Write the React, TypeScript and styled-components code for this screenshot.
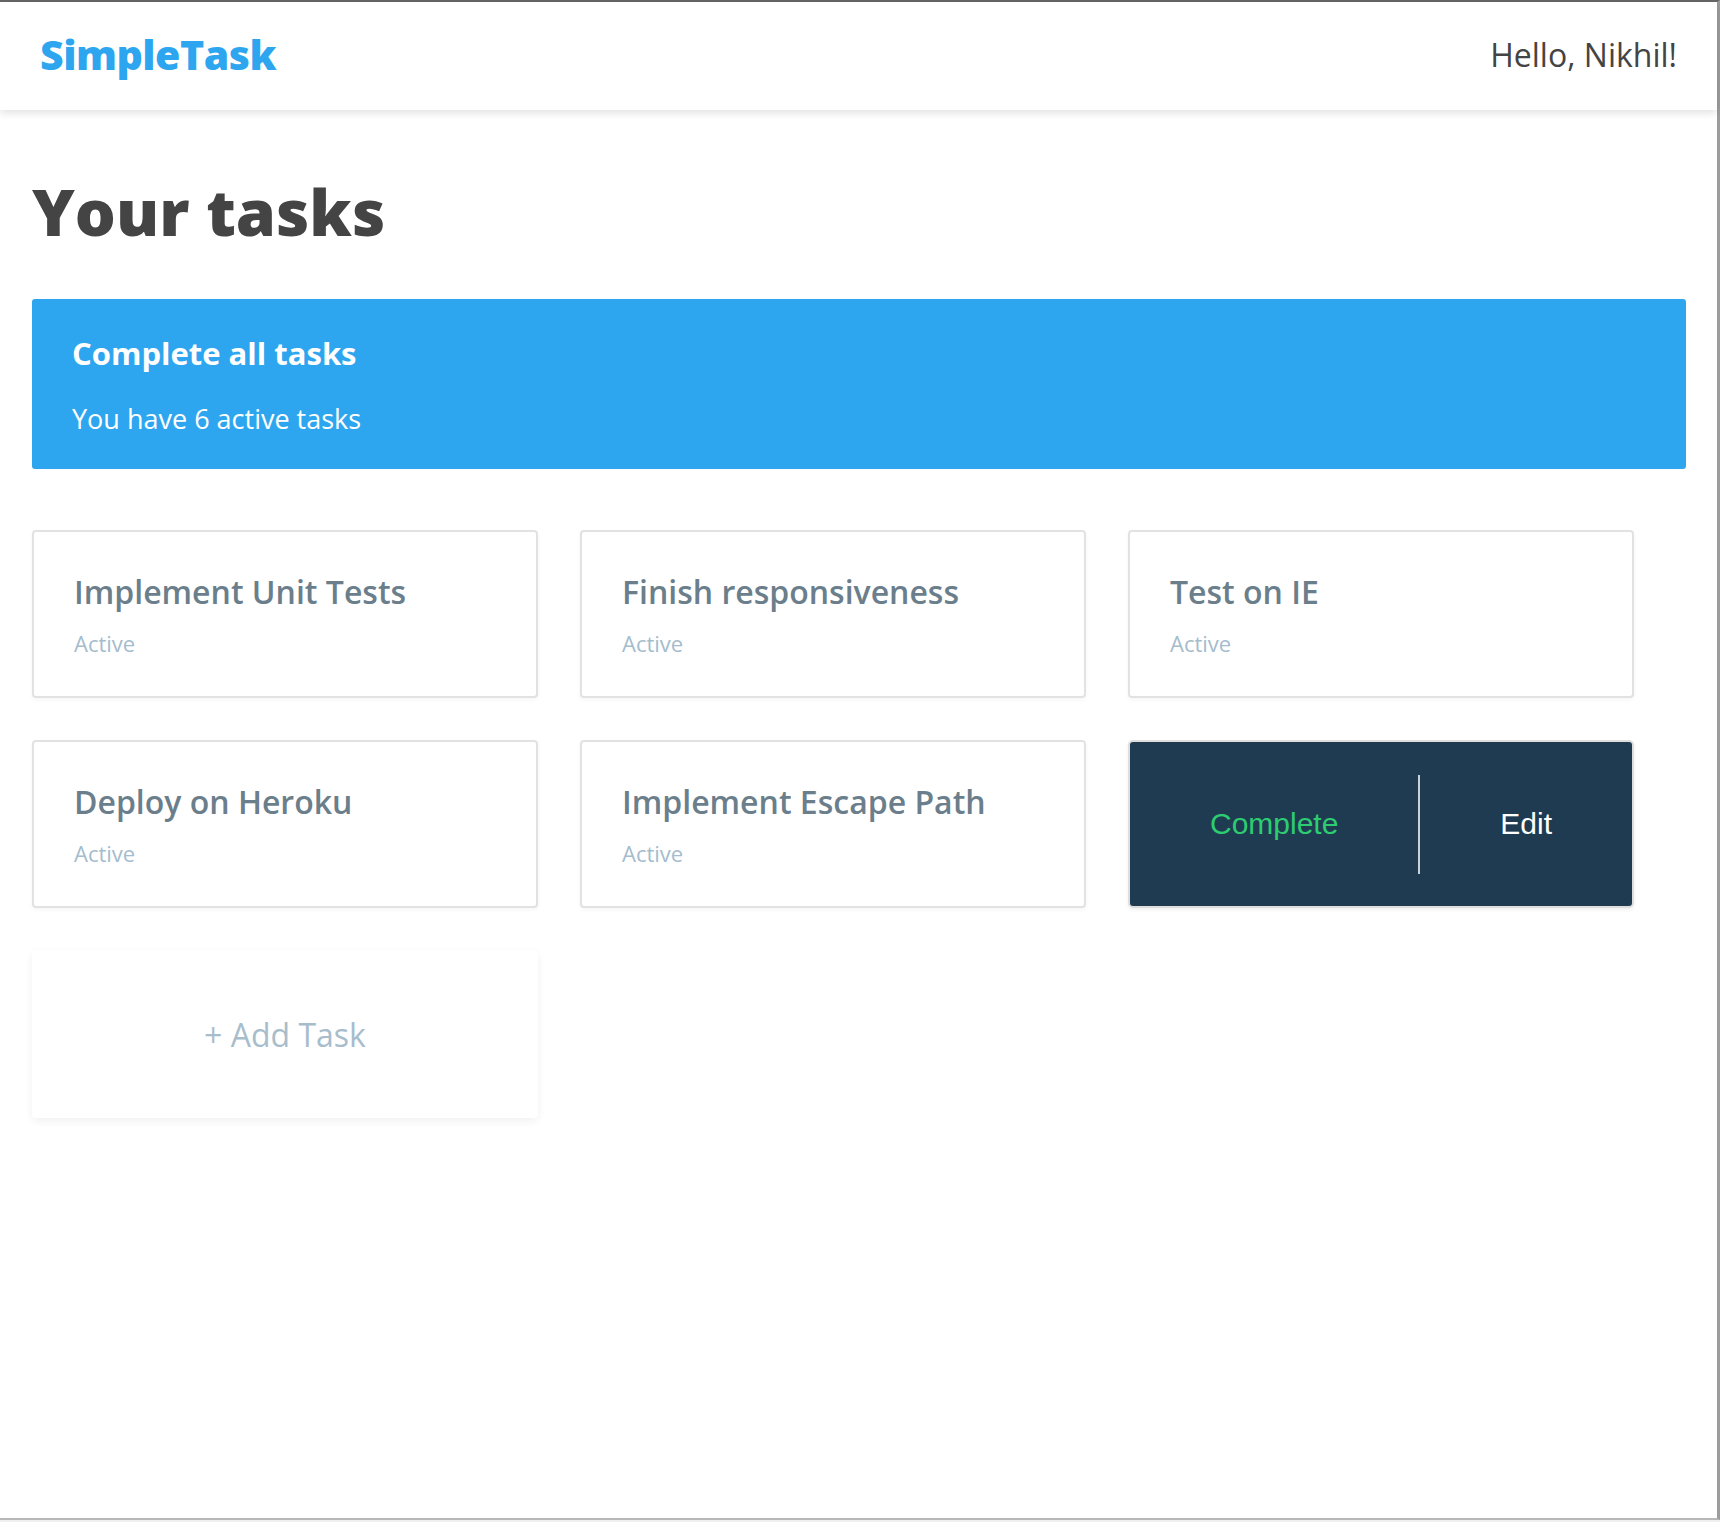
import React from "react"
import styled, { createGlobalStyle } from "styled-components"

const GlobalStyle = createGlobalStyle`
  html, body {
    margin: 0;
    padding: 0;
    background: #efefef;
  }
  * {
    box-sizing: border-box;
  }
`

const tasks = [
  { id: 1, title: "Implement Unit Tests", status: "Active" },
  { id: 2, title: "Finish responsiveness", status: "Active" },
  { id: 3, title: "Test on IE", status: "Active" },
  { id: 4, title: "Deploy on Heroku", status: "Active" },
  { id: 5, title: "Implement Escape Path", status: "Active" },
]

const App = () => {
  return (
    <>
      <GlobalStyle />
      <Window>
        <Header>
          <Logo>SimpleTask</Logo>
          <Greeting>Hello, Nikhil!</Greeting>
        </Header>
        <Main>
          <PageTitle>Your tasks</PageTitle>
          <Banner>
            <BannerTitle>Complete all tasks</BannerTitle>
            <BannerText>You have 6 active tasks</BannerText>
          </Banner>
          <TaskGrid>
            {tasks.map((t) => (
              <TaskCard key={t.id}>
                <TaskTitle>{t.title}</TaskTitle>
                <TaskStatus>{t.status}</TaskStatus>
              </TaskCard>
            ))}
            <ActionCard>
              <ActionButton $color="#2ecc71">Complete</ActionButton>
              <Divider />
              <ActionButton $color="#ffffff">Edit</ActionButton>
            </ActionCard>
            <AddCard>+ Add Task</AddCard>
          </TaskGrid>
        </Main>
      </Window>
    </>
  )
}

const Window = styled.div`
  height: 1520px;
  background: #ffffff;
  border-top: 2px solid #666666;
  border-right: 3px solid #9c9c9c;
  border-bottom: 2px solid #b8b8b8;
  font-family: "Open Sans", "Noto Sans", sans-serif;
`

const Header = styled.header`
  height: 108px;
  display: flex;
  align-items: center;
  justify-content: space-between;
  padding: 0 40px 4px 40px;
  background: #ffffff;
  box-shadow: 0 3px 8px rgba(0, 0, 0, 0.12);
  position: relative;
`

const Logo = styled.div`
  font-size: 41px;
  font-weight: 800;
  color: #2ea6ef;
  letter-spacing: -0.5px;
`

const Greeting = styled.div`
  font-size: 32px;
  color: #444444;
`

const Main = styled.main`
  padding: 53px 31px 0 32px;
`

const PageTitle = styled.h1`
  margin: 0 0 40px 0;
  font-size: 64.5px;
  font-weight: 800;
  line-height: 96px;
  color: #444444;
`

const Banner = styled.section`
  height: 170px;
  background: #2ea6ef;
  border-radius: 3px;
  padding: 30px 40px;
  color: #ffffff;
`

const BannerTitle = styled.div`
  font-size: 31px;
  font-weight: 700;
  line-height: 48px;
`

const BannerText = styled.div`
  margin-top: 24px;
  font-size: 27px;
  font-weight: 400;
  line-height: 36px;
`

const TaskGrid = styled.div`
  display: flex;
  flex-wrap: wrap;
  gap: 42px 42px;
  margin-top: 61px;
`

const cardBase = `
  width: 506px;
  height: 168px;
  border-radius: 4px;
  background: #ffffff;
`

const TaskCard = styled.div`
  ${cardBase}
  border: 2px solid #e2e2e2;
  box-shadow: 0 2px 4px rgba(0, 0, 0, 0.04);
  padding: 38px 40px 0 40px;
`

const TaskTitle = styled.div`
  font-size: 32px;
  font-weight: 600;
  line-height: 44px;
  color: #6b7e8b;
`

const TaskStatus = styled.div`
  margin-top: 14px;
  font-size: 22px;
  line-height: 30px;
  color: #a5bccc;
`

const ActionCard = styled.div`
  ${cardBase}
  display: flex;
  align-items: center;
  background: #1e3b51;
  border: 2px solid #dedede;
  border-radius: 5px;
  box-shadow: 0 2px 4px rgba(0, 0, 0, 0.06);
`

const ActionButton = styled.div<{ $color: string }>`
  flex: 1 1 auto;
  text-align: center;
  font-family: "Liberation Sans", Arial, sans-serif;
  font-size: 30px;
  color: ${(p) => p.$color};
  cursor: pointer;
`

const Divider = styled.div`
  width: 2px;
  height: 99px;
  background: #c9d1d8;
`

const AddCard = styled.div`
  ${cardBase}
  display: flex;
  align-items: center;
  justify-content: center;
  box-shadow: 0 3px 8px rgba(0, 0, 0, 0.06);
  font-size: 32px;
  color: #a8bdcc;
  cursor: pointer;
`

export default App
